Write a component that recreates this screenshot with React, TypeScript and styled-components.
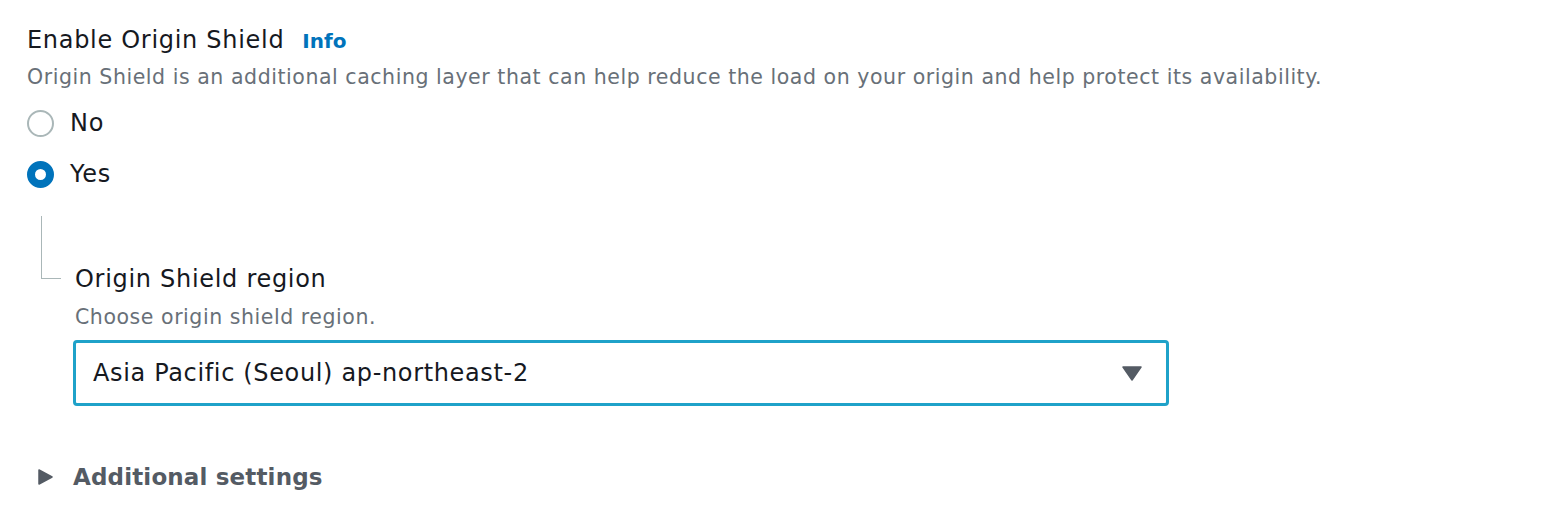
import React from 'react';
import styled, { createGlobalStyle } from 'styled-components';

const GlobalStyle = createGlobalStyle`
    body {
        margin: 0;
        background: #ffffff;
        font-family: "DejaVu Sans", "Noto Sans", Arial, sans-serif;
        color: #16191f;
    }
`;

const Page = styled.div`
    padding: 25px 0 0 27px;
    display: flex;
    flex-direction: column;
`;

const TitleRow = styled.div`
    display: flex;
    align-items: baseline;
    gap: 18px;
    font-size: 24px;
    letter-spacing: 0.7px;
    line-height: 30px;
`;

const InfoLink = styled.a`
    color: #0073bb;
    font-weight: 700;
    font-size: 20px;
    letter-spacing: 0;
    text-decoration: none;
    cursor: pointer;
`;

const Description = styled.div`
    color: #687078;
    font-size: 20.5px;
    letter-spacing: 0.55px;
    line-height: 28px;
    margin-top: 7px;
`;

const RadioGroup = styled.div`
    display: flex;
    flex-direction: column;
    gap: 21px;
    margin-top: 17px;
`;

const RadioRow = styled.label`
    display: flex;
    align-items: center;
    gap: 16px;
    font-size: 24px;
    letter-spacing: 0.7px;
    line-height: 30px;
    cursor: pointer;
`;

const RadioCircle = styled.span<{ checked: boolean }>`
    box-sizing: border-box;
    width: 27px;
    height: 27px;
    border-radius: 50%;
    border: ${(p) => (p.checked ? '8.5px solid #0073bb' : '2px solid #aab7b8')};
    background: #ffffff;
`;

const Nested = styled.div`
    display: flex;
    margin: 27px 0 0 14px;
`;

const Connector = styled.div`
    width: 19px;
    height: 62px;
    border-left: 1px solid #aab7b8;
    border-bottom: 1px solid #aab7b8;
    flex-shrink: 0;
`;

const Field = styled.div`
    display: flex;
    flex-direction: column;
    margin: 48px 0 0 14px;
`;

const FieldLabel = styled.div`
    font-size: 24px;
    letter-spacing: 0.7px;
    line-height: 30px;
`;

const FieldHint = styled.div`
    color: #687078;
    font-size: 20.5px;
    letter-spacing: 0.55px;
    line-height: 28px;
    margin-top: 9px;
`;

const Select = styled.div`
    box-sizing: border-box;
    width: 1096px;
    height: 66px;
    margin: 9px 0 0 -2px;
    border: 3px solid #1fa2c9;
    border-radius: 4px;
    display: flex;
    align-items: center;
    justify-content: space-between;
    padding: 0 24px 0 17px;
    font-size: 24px;
    letter-spacing: 0.65px;
    color: #16191f;
`;

const Caret = styled.svg`
    width: 20px;
    height: 15px;
    fill: #545b64;
`;

const Expander = styled.div`
    display: flex;
    align-items: center;
    gap: 20px;
    margin: 56px 0 0 11px;
    color: #545b64;
    font-weight: 700;
    font-size: 23px;
    letter-spacing: 0.15px;
    line-height: 30px;
    cursor: pointer;
`;

const ExpandIcon = styled.svg`
    width: 15px;
    height: 16px;
    fill: #545b64;
`;

const App: React.FC = () => {
    const [choice, setChoice] = React.useState('yes');

    return (
        <>
            <GlobalStyle />
            <Page>
                <TitleRow>
                    <span>Enable Origin Shield</span>
                    <InfoLink>Info</InfoLink>
                </TitleRow>
                <Description>
                    Origin Shield is an additional caching layer that can help reduce the load on your origin and help protect its availability.
                </Description>
                <RadioGroup>
                    <RadioRow onClick={() => setChoice('no')}>
                        <RadioCircle checked={choice === 'no'} />
                        No
                    </RadioRow>
                    <RadioRow onClick={() => setChoice('yes')}>
                        <RadioCircle checked={choice === 'yes'} />
                        Yes
                    </RadioRow>
                </RadioGroup>
                <Nested>
                    <Connector />
                    <Field>
                        <FieldLabel>Origin Shield region</FieldLabel>
                        <FieldHint>Choose origin shield region.</FieldHint>
                        <Select>
                            <span>Asia Pacific (Seoul) ap-northeast-2</span>
                            <Caret viewBox="0 0 20 15">
                                <path d="M1 1 H19 L10 14 Z" strokeLinejoin="round" stroke="#545b64" strokeWidth="1.5" />
                            </Caret>
                        </Select>
                    </Field>
                </Nested>
                <Expander>
                    <ExpandIcon viewBox="0 0 15 16">
                        <path d="M1 1 L14 8 L1 15 Z" strokeLinejoin="round" stroke="#545b64" strokeWidth="1.5" />
                    </ExpandIcon>
                    Additional settings
                </Expander>
            </Page>
        </>
    );
};

export default App;
